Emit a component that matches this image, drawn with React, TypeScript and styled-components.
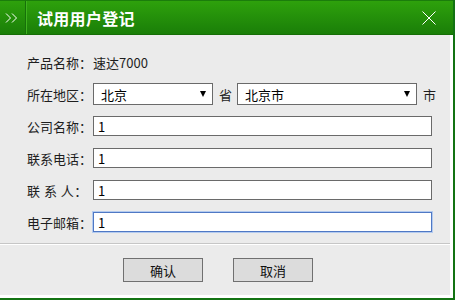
import styled, { createGlobalStyle } from "styled-components";

const GlobalStyle = createGlobalStyle`
  html, body {
    margin: 0;
    padding: 0;
    background: #ffffff;
  }
  * {
    box-sizing: border-box;
  }
`;

const FONT = `"Noto Sans CJK SC", "Liberation Sans", sans-serif`;

export default function App() {
  return (
    <Dialog>
      <GlobalStyle />
      <Header>
        <ExpandIcon>
          <svg width="13" height="10" viewBox="0 0 13 10">
            <polyline points="1,0.5 5.5,5 1,9.5" fill="none" stroke="#ffffff" strokeWidth="1" />
            <polyline points="7,0.5 11.5,5 7,9.5" fill="none" stroke="#ffffff" strokeWidth="1" />
          </svg>
        </ExpandIcon>
        <Title>试用用户登记</Title>
        <CloseButton aria-label="关闭">
          <svg width="14" height="14" viewBox="0 0 14 14">
            <line x1="0.5" y1="0.5" x2="13.5" y2="13.5" stroke="#ffffff" strokeWidth="1" />
            <line x1="13.5" y1="0.5" x2="0.5" y2="13.5" stroke="#ffffff" strokeWidth="1" />
          </svg>
        </CloseButton>
      </Header>
      <Content>
        <Form>
          <Label>产品名称：</Label>
          <Value>速达7000</Value>

          <Label>所在地区：</Label>
          <Region>
            <SelectBox $width={120}>
              <Select defaultValue="北京">
                <option>北京</option>
              </Select>
              <Arrow />
            </SelectBox>
            <Unit>省</Unit>
            <SelectBox $width={180}>
              <Select defaultValue="北京市">
                <option>北京市</option>
              </Select>
              <Arrow />
            </SelectBox>
            <Unit>市</Unit>
          </Region>

          <Label>公司名称：</Label>
          <Field><Input defaultValue="1" /></Field>

          <Label>联系电话：</Label>
          <Field><Input defaultValue="1" /></Field>

          <Label $spaced>联 系 人：</Label>
          <Field><Input defaultValue="1" /></Field>

          <Label>电子邮箱：</Label>
          <Field><Input defaultValue="1" $focused /></Field>
        </Form>
        <Footer>
          <Button>确认</Button>
          <Button>取消</Button>
        </Footer>
      </Content>
    </Dialog>
  );
}

const Dialog = styled.div`
  width: 455px;
  height: 300px;
  display: flex;
  flex-direction: column;
  background: #ffffff;
  border-right: 2px solid #137313;
  border-bottom: 2px solid #137313;
  font-family: ${FONT};
  font-size: 13px;
  color: #1e1e1e;
`;

const Header = styled.div`
  height: 35px;
  flex-shrink: 0;
  display: flex;
  align-items: center;
  background: linear-gradient(#2ea10c, #1a7e08);
  border-top: 1px solid #1b7d0b;
  border-bottom: 1px solid #166d06;
`;

const ExpandIcon = styled.div`
  width: 26px;
  height: 100%;
  display: flex;
  align-items: center;
  padding-left: 5px;
  padding-top: 1px;
  border-right: 1px solid #17700a;
  box-shadow: 1px 0 0 #3fb31f;
`;

const Title = styled.div`
  margin-left: 11px;
  color: #ffffff;
  font-size: 16px;
  font-weight: bold;
  letter-spacing: 0.3px;
`;

const CloseButton = styled.div`
  margin-left: auto;
  margin-right: 17px;
  display: flex;
  align-items: center;
`;

const Content = styled.div`
  flex: 1;
  display: flex;
  flex-direction: column;
  margin-right: 3px;
  margin-bottom: 3px;
  background: #ebebeb;
`;

const Form = styled.div`
  display: grid;
  grid-template-columns: 66px 1fr;
  grid-auto-rows: 22px;
  row-gap: 10px;
  align-items: center;
  padding: 16px 18px 10px 27px;
  border-bottom: 1px solid #c6c6c6;
  box-shadow: 0 1px 0 #ffffff;
`;

const Label = styled.div<{ $spaced?: boolean }>`
  white-space: pre;
  color: #1e1e1e;
  letter-spacing: ${(p) => (p.$spaced ? "0.5px" : "0")};
`;

const Value = styled.div`
  color: #1e1e1e;
`;

const Region = styled.div`
  display: flex;
  align-items: center;
`;

const SelectBox = styled.div<{ $width: number }>`
  position: relative;
  width: ${(p) => p.$width}px;
  height: 22px;
`;

const Select = styled.select`
  appearance: none;
  width: 100%;
  height: 100%;
  margin: 0;
  padding: 0 0 0 7px;
  border: 1px solid #6a6a6a;
  border-radius: 0;
  background: #ffffff;
  font-family: ${FONT};
  font-size: 13px;
  color: #000000;
  outline: none;
`;

const Arrow = styled.span`
  position: absolute;
  right: 7px;
  top: 8px;
  width: 0;
  height: 0;
  border-left: 3.5px solid transparent;
  border-right: 3.5px solid transparent;
  border-top: 6px solid #000000;
  pointer-events: none;
`;

const Unit = styled.span`
  margin: 0 5px 0 6px;
`;

const Field = styled.div`
  display: flex;
  align-items: center;
`;

const Input = styled.input<{ $focused?: boolean }>`
  width: 339px;
  height: 20px;
  margin: 0;
  padding: 0 4px;
  border: 1px solid ${(p) => (p.$focused ? "#4f78c4" : "#6a6a6a")};
  border-radius: 0;
  box-shadow: ${(p) => (p.$focused ? "0 0 0 1px #b4cbef" : "none")};
  background: #ffffff;
  font-family: ${FONT};
  font-size: 13px;
  color: #000000;
  outline: none;
`;

const Footer = styled.div`
  flex: 1;
  margin-top: 1px;
  display: flex;
  align-items: flex-start;
  gap: 30px;
  padding: 13px 0 0 123px;
`;

const Button = styled.button`
  width: 80px;
  height: 24px;
  margin: 0;
  padding: 0;
  border: 1px solid #707070;
  border-radius: 0;
  background: #dcdcdc;
  font-family: ${FONT};
  font-size: 13px;
  color: #111111;
`;
